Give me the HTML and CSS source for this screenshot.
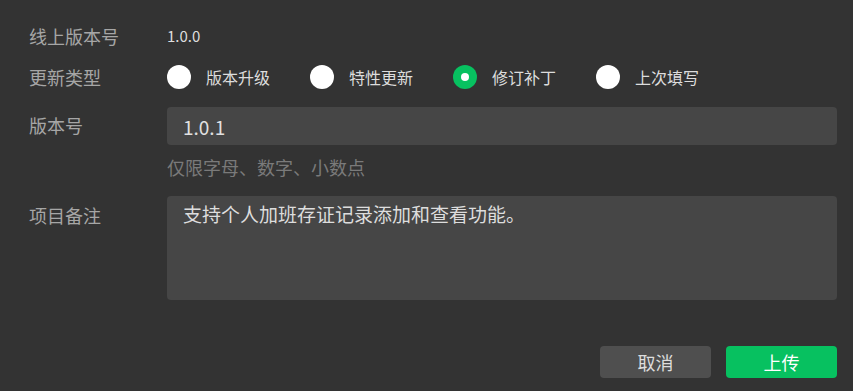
FILE: index.html
```html
<!DOCTYPE html>
<html lang="zh-CN">
<head>
<meta charset="utf-8">
<title>上传</title>
<link rel="stylesheet" href="styles.css">
</head>
<body>
<form class="panel">
  <div class="row row-online">
    <div class="label">线上版本号</div>
    <div class="field"><span class="online-value">1.0.0</span></div>
  </div>
  <div class="row row-type">
    <div class="label">更新类型</div>
    <div class="field radios">
      <label class="radio"><span class="dot"></span><span class="radio-text">版本升级</span></label>
      <label class="radio"><span class="dot"></span><span class="radio-text">特性更新</span></label>
      <label class="radio checked"><span class="dot"></span><span class="radio-text">修订补丁</span></label>
      <label class="radio"><span class="dot"></span><span class="radio-text">上次填写</span></label>
    </div>
  </div>
  <div class="row row-version">
    <div class="label label-input">版本号</div>
    <div class="field column">
      <input class="text-input" type="text" value="1.0.1">
      <div class="hint">仅限字母、数字、小数点</div>
    </div>
  </div>
  <div class="row row-note">
    <div class="label label-note">项目备注</div>
    <div class="field">
      <textarea class="note">支持个人加班存证记录添加和查看功能。</textarea>
    </div>
  </div>
  <div class="actions">
    <button type="button" class="btn btn-cancel">取消</button>
    <button type="button" class="btn btn-primary">上传</button>
  </div>
</form>
</body>
</html>
```

FILE: styles.css
```css
* { box-sizing: border-box; }

html, body {
  margin: 0;
  padding: 0;
  background: #333333;
  width: 853px;
  height: 391px;
  overflow: hidden;
}

body {
  font-family: "Noto Sans CJK SC", "Noto Sans", sans-serif;
  color: #dddddd;
}

.panel {
  display: flex;
  flex-direction: column;
  padding: 24px 16px 0 29px;
}

.row {
  display: flex;
  align-items: flex-start;
}

.label {
  width: 138px;
  flex: none;
  font-size: 18px;
  line-height: 24px;
  color: #a6a6a6;
}

.field {
  flex: 1;
  display: flex;
  align-items: center;
  min-height: 24px;
}

.column {
  flex-direction: column;
  align-items: stretch;
}

.online-value {
  font-size: 15px;
  line-height: 24px;
  color: #dddddd;
}

.row-type {
  margin-top: 17px;
}

.radios {
  gap: 40px;
}

.radio {
  display: flex;
  align-items: center;
  cursor: pointer;
}

.dot {
  width: 24px;
  height: 24px;
  border-radius: 50%;
  background: #ffffff;
  flex: none;
  display: flex;
  align-items: center;
  justify-content: center;
}

.radio.checked .dot {
  background: #07c160;
}

.radio.checked .dot::after {
  content: "";
  width: 8px;
  height: 8px;
  border-radius: 50%;
  background: #ffffff;
}

.radio-text {
  margin-left: 15px;
  font-size: 16px;
  line-height: 24px;
  color: #dddddd;
}

.row-version {
  margin-top: 18px;
}

.label-input {
  line-height: 36px;
}

.text-input {
  height: 38px;
  width: 100%;
  border: none;
  outline: none;
  border-radius: 4px;
  background: #464646;
  color: #e0e0e0;
  font-family: "Noto Sans CJK SC", "Noto Sans", sans-serif;
  font-size: 19px;
  padding: 0 16px;
}

.hint {
  margin-top: 10px;
  font-size: 18px;
  line-height: 24px;
  color: #7a7a7a;
}

.row-note {
  margin-top: 17px;
}

.label-note {
  padding-top: 7px;
}

.note {
  width: 100%;
  height: 104px;
  border: none;
  outline: none;
  resize: none;
  border-radius: 4px;
  background: #464646;
  color: #dddddd;
  font-family: "Noto Sans CJK SC", "Noto Sans", sans-serif;
  font-size: 19px;
  line-height: 26px;
  padding: 5px 16px;
  margin: 0;
  display: block;
}

.actions {
  display: flex;
  justify-content: flex-end;
  gap: 15px;
  margin-top: 46px;
}

.btn {
  width: 111px;
  height: 32px;
  border: none;
  border-radius: 4px;
  font-family: "Noto Sans CJK SC", "Noto Sans", sans-serif;
  font-size: 18px;
  line-height: 32px;
  padding: 0;
  cursor: pointer;
}

.btn-cancel {
  background: #4f4f4f;
  color: #dddddd;
}

.btn-primary {
  background: #07c160;
  color: #ffffff;
}
```
